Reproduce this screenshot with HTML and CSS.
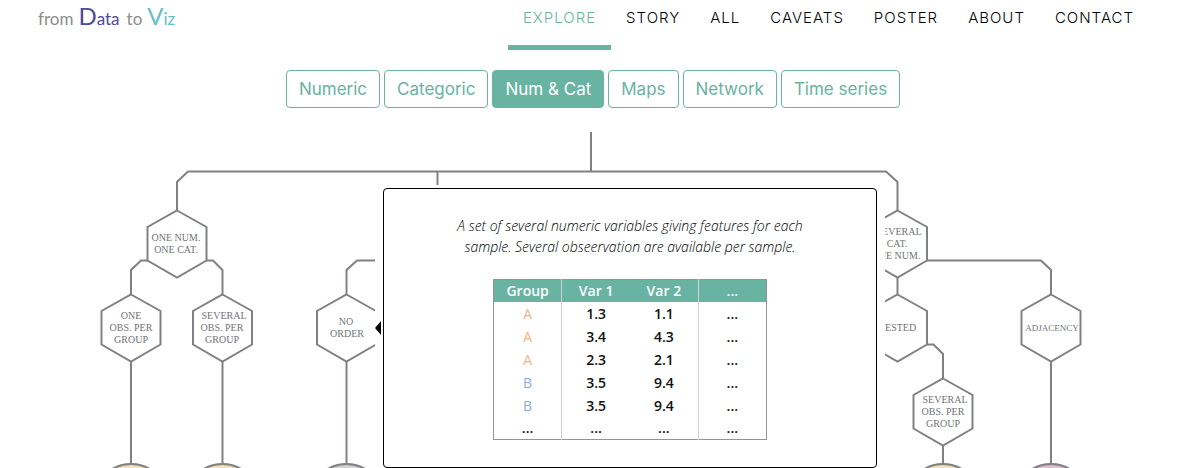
FILE: index.html
```html
<!DOCTYPE html>
<html lang="en">
<head>
<meta charset="utf-8">
<title>From Data to Viz</title>
<link rel="stylesheet" href="styles.css">
</head>
<body>
<header class="header">
  <a class="logo" href="#"><span>from</span><span class="logo-data">Data</span><span class="logo-to">to</span><span class="logo-viz">Viz</span></a>
  <nav class="nav">
    <a class="active" href="#">EXPLORE</a>
    <a href="#">STORY</a>
    <a href="#">ALL</a>
    <a href="#">CAVEATS</a>
    <a href="#">POSTER</a>
    <a href="#">ABOUT</a>
    <a href="#">CONTACT</a>
  </nav>
</header>
<main>
  <div class="filters">
    <button type="button">Numeric</button>
    <button type="button">Categoric</button>
    <button type="button" class="selected">Num &amp; Cat</button>
    <button type="button">Maps</button>
    <button type="button">Network</button>
    <button type="button">Time series</button>
  </div>
  <section class="stage">
    <svg class="tree" viewBox="0 128 1191 340" role="img" aria-label="Decision tree">
      <defs>
        <path id="hex" d="M0 0 29.5 16.5V50L0 67-29.5 50V16.5Z"/>
        <radialGradient id="sand"><stop offset="0.7" stop-color="#fdf0d8"/><stop offset="1" stop-color="#f6dba6"/></radialGradient>
        <radialGradient id="grey"><stop offset="0.7" stop-color="#e6e6e6"/><stop offset="1" stop-color="#cccccc"/></radialGradient>
        <radialGradient id="pink"><stop offset="0.7" stop-color="#efd3dd"/><stop offset="1" stop-color="#dfb6c5"/></radialGradient>
      </defs>
      <g class="lines">
        <path d="M591 132V171.500M177 210.500V182L188 171.500H886L897.500 182V210.500M437.500 171V200"/>
        <path d="M148 260.500H141L131 270V294.500M206 260.500H213L222.500 270V294.500M400 260.500H357L346.500 270V294.500"/>
        <path d="M927 260.500H1041L1051 270V294.500M897.500 277V294.500M927 344.500H933.500L943 354V378.500"/>
        <path d="M131 361V463M222.500 361V463M346.500 361V463M943 445V463M1051 361V463"/>
        <use href="#hex" x="177" y="210.500"/>
        <use href="#hex" x="131" y="294.500"/>
        <use href="#hex" x="222.500" y="294.500"/>
        <use href="#hex" x="346.500" y="294.500"/>
        <use href="#hex" x="897.500" y="210.500"/>
        <use href="#hex" x="897.500" y="294.500"/>
        <use href="#hex" x="943" y="378.500"/>
        <use href="#hex" x="1051" y="294.500"/>
      </g>
      <g class="dots">
        <circle cx="131" cy="501" r="37" fill="url(#sand)"/>
        <circle cx="222.500" cy="501" r="37" fill="url(#sand)"/>
        <circle cx="346.500" cy="501" r="37" fill="url(#grey)"/>
        <circle cx="943" cy="501" r="37" fill="url(#sand)"/>
        <circle cx="1051" cy="501" r="37" fill="url(#pink)"/>
      </g>
      <g class="labels">
        <text x="176" y="241">ONE NUM.</text><text x="176" y="253">ONE CAT.</text>
        <text x="131" y="319">ONE</text><text x="131" y="331">OBS. PER</text><text x="131" y="343">GROUP</text>
        <text x="224" y="319">SEVERAL</text><text x="222" y="331">OBS. PER</text><text x="222" y="343">GROUP</text>
        <text x="346" y="325">NO</text><text x="347" y="337">ORDER</text>
        <text x="899" y="235">SEVERAL</text><text x="897" y="247">CAT.</text><text x="896" y="259">ONE NUM.</text>
        <text x="897" y="331">NESTED</text>
        <text class="small" x="1052" y="331">ADJACENCY</text>
        <text x="945" y="403">SEVERAL</text><text x="943" y="415">OBS. PER</text><text x="943" y="427">GROUP</text>
      </g>
    </svg>
    <aside class="tip">
      <div class="tip-box">
        <p>A set of several numeric variables giving features for each sample. Several obseervation are available per sample.</p>
        <table>
          <thead><tr><th scope="col">Group</th><th scope="col">Var 1</th><th scope="col">Var 2</th><th scope="col">...</th></tr></thead>
          <tbody>
            <tr><td class="a">A</td><td>1.3</td><td>1.1</td><td>...</td></tr>
            <tr><td class="a">A</td><td>3.4</td><td>4.3</td><td>...</td></tr>
            <tr><td class="a">A</td><td>2.3</td><td>2.1</td><td>...</td></tr>
            <tr><td class="b">B</td><td>3.5</td><td>9.4</td><td>...</td></tr>
            <tr><td class="b">B</td><td>3.5</td><td>9.4</td><td>...</td></tr>
            <tr class="rest"><td>...</td><td>...</td><td>...</td><td>...</td></tr>
          </tbody>
        </table>
      </div>
    </aside>
  </section>
</main>
</body>
</html>
```
FILE: styles.css
```css
* { box-sizing: border-box; }
body { margin: 0; background: #fff; font-family: Inter, "Liberation Sans", sans-serif; }
.header {
  display: flex;
  justify-content: space-between;
  align-items: flex-start;
  padding: 0 42px 0 38px;
}
.logo {
  display: flex;
  align-items: baseline;
  padding-top: 2px;
  font: 17px/28px Lato, sans-serif;
  color: #8c8c8c;
  text-decoration: none;
}
.logo-data, .logo-viz { display: inline-block; margin-left: 5px; }
.logo-data::first-letter, .logo-viz::first-letter { font-size: 24px; }
.logo-data { color: #4b4a9c; }
.logo-to { margin-left: 7px; }
.logo-viz { color: #64c0c4; }
.nav { display: flex; }
.nav a {
  padding: 6px 15px 0;
  height: 50px;
  font-size: 15px;
  line-height: 24px;
  font-weight: 300;
  letter-spacing: 1px;
  color: #000;
  text-decoration: none;
  border-bottom: 5px solid transparent;
}
.nav .active { color: #69b3a2; border-bottom-color: #69b3a2; }
.filters {
  display: flex;
  flex-wrap: wrap;
  justify-content: center;
  gap: 4px;
  padding: 20px 5px 20px 0;
}
.filters button {
  height: 38px;
  padding: 0 12px;
  font: 17px/24px Inter, sans-serif;
  color: #69b3a2;
  background: #fff;
  border: 1px solid #69b3a2;
  border-radius: 4px;
}
.filters .selected { color: #fff; background: #69b3a2; }
.stage { position: relative; overflow: hidden; }
.tree { display: block; width: 100%; height: auto; }
.lines { fill: none; stroke: #808184; stroke-width: 2; }
.dots { stroke: #808184; stroke-width: 2; }
.labels { font: 10px "Liberation Serif", serif; fill: #727376; text-anchor: middle; }
.labels .small { font-size: 9px; }
.tip {
  position: absolute;
  left: 375px;
  top: 57px;
  width: 510px;
  padding: 3px 8px;
  background: #fff;
}
.tip::before {
  content: "";
  position: absolute;
  left: 0;
  top: 136px;
  border: solid transparent;
  border-width: 7px 6px 7px 0;
  border-right-color: #000;
}
.tip-box {
  display: flex;
  flex-direction: column;
  align-items: center;
  padding: 26px 60px 27px;
  border: 1px solid #000;
  border-radius: 4px;
}
.tip-box p {
  margin: 0 0 22px;
  font: italic 300 14px/21px "Open Sans", sans-serif;
  color: #000;
  text-align: center;
}
.tip-box table {
  width: 274px;
  table-layout: fixed;
  border-collapse: collapse;
  border: 1px solid #949494;
  font: 600 14px/22px "Open Sans", sans-serif;
  text-align: center;
  color: #111;
}
th { height: 22px; padding: 0; }
td { height: 23px; padding: 0; }
.rest td { height: 22px; }
th { color: #fff; background: #69b3a2; font-weight: 600; }
th:nth-child(2), td:nth-child(2), th:last-child, td:last-child { border-left: 1px solid #d0d0d0; }
td.a { color: #f4b183; font-weight: 400; }
td.b { color: #8faadc; font-weight: 400; }
```
